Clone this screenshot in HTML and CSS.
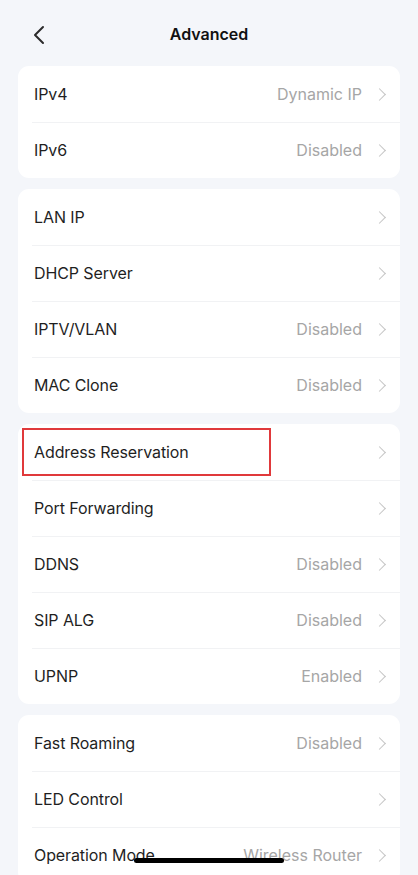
FILE: index.html
```html
<!DOCTYPE html>
<html>
<head>
<meta charset="utf-8">
<link rel="stylesheet" href="styles.css">
</head>
<body>
<div class="screen">
  <header class="topbar">
    <svg class="back" width="14" height="20" viewBox="0 0 14 20"><path d="M11 2 L3 10 L11 18" fill="none" stroke="#2b2b2b" stroke-width="2" stroke-linecap="round" stroke-linejoin="round"/></svg>
    <h1 class="title">Advanced</h1>
  </header>

  <section class="card">
    <div class="row"><span class="label">IPv4</span><span class="value">Dynamic IP</span><span class="chev"></span></div>
    <div class="row"><span class="label">IPv6</span><span class="value">Disabled</span><span class="chev"></span></div>
  </section>

  <section class="card">
    <div class="row"><span class="label">LAN IP</span><span class="value"></span><span class="chev"></span></div>
    <div class="row"><span class="label">DHCP Server</span><span class="value"></span><span class="chev"></span></div>
    <div class="row"><span class="label">IPTV/VLAN</span><span class="value">Disabled</span><span class="chev"></span></div>
    <div class="row"><span class="label">MAC Clone</span><span class="value">Disabled</span><span class="chev"></span></div>
  </section>

  <section class="card">
    <div class="row highlighted"><span class="label">Address Reservation</span><span class="value"></span><span class="chev"></span><span class="mark"></span></div>
    <div class="row"><span class="label">Port Forwarding</span><span class="value"></span><span class="chev"></span></div>
    <div class="row"><span class="label">DDNS</span><span class="value">Disabled</span><span class="chev"></span></div>
    <div class="row"><span class="label">SIP ALG</span><span class="value">Disabled</span><span class="chev"></span></div>
    <div class="row"><span class="label">UPNP</span><span class="value">Enabled</span><span class="chev"></span></div>
  </section>

  <section class="card">
    <div class="row"><span class="label">Fast Roaming</span><span class="value">Disabled</span><span class="chev"></span></div>
    <div class="row"><span class="label">LED Control</span><span class="value"></span><span class="chev"></span></div>
    <div class="row"><span class="label">Operation Mode</span><span class="value">Wireless Router</span><span class="chev"></span></div>
  </section>

  <div class="home-indicator"></div>
</div>
</body>
</html>
```

FILE: styles.css
```css
html, body {
  margin: 0;
  padding: 0;
  background: #f4f6fa;
}
body {
  font-family: Inter, "Noto Sans", sans-serif;
  color: #1c1c1e;
  -webkit-font-smoothing: antialiased;
}
.screen {
  width: 418px;
  height: 875px;
  overflow: hidden;
  position: relative;
  display: flex;
  flex-direction: column;
  gap: 11px;
  padding: 0 18px;
  box-sizing: border-box;
}
.screen > * {
  flex-shrink: 0;
}
.topbar {
  height: 55px;
  display: flex;
  align-items: center;
  justify-content: center;
  position: relative;
  margin: 0 -18px;
}
.back {
  position: absolute;
  left: 32px;
  top: 25px;
}
.title {
  margin: 0;
  font-size: 16px;
  font-weight: 600;
  color: #111;
  padding-top: 13px;
}
.card {
  background: #ffffff;
  border-radius: 11px;
  display: flex;
  flex-direction: column;
}
.row {
  height: 56px;
  display: flex;
  align-items: center;
  padding: 0 14px 0 16px;
  position: relative;
  font-size: 16px;
}
.row + .row::before {
  content: "";
  position: absolute;
  top: 0;
  left: 14px;
  right: 0;
  height: 1px;
  background: #f1f2f4;
}
.label {
  flex: 1;
  color: #1f1f1f;
  letter-spacing: -0.1px;
}
.value {
  color: #a6a6a6;
  margin-right: 13px;
}
.chev {
  width: 8px;
  height: 8px;
  border-top: 1.4px solid #c4c4c4;
  border-right: 1.4px solid #c4c4c4;
  transform: rotate(45deg);
  margin-right: 2px;
}
.mark {
  position: absolute;
  left: 4px;
  top: 4px;
  width: 245px;
  height: 44px;
  border: 2.5px solid #e0393b;
}
.home-indicator {
  position: absolute;
  left: 134px;
  bottom: 12px;
  width: 150px;
  height: 5px;
  border-radius: 3px;
  background: #000;
}
```
